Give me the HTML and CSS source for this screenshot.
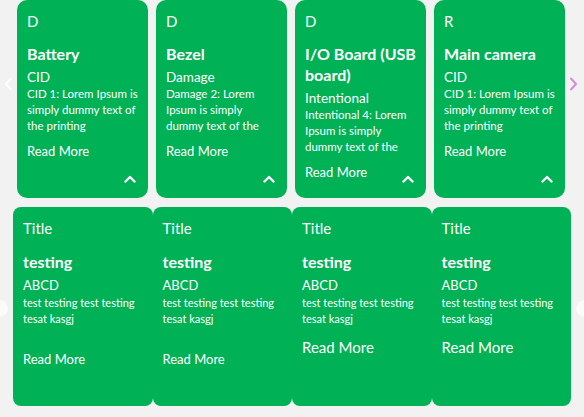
FILE: index.html
```html
<!DOCTYPE html>
<html>
<head>
<meta charset="utf-8">
<link rel="stylesheet" href="styles.css">
</head>
<body>
<div class="page">
  <section class="slider top-slider">
    <span class="nav nav-prev">
      <svg width="9" height="14" viewBox="0 0 9 14"><path d="M7 1.5 L2 7 L7 12.5" fill="none" stroke="currentColor" stroke-width="2.2" stroke-linecap="round" stroke-linejoin="round"/></svg>
    </span>
    <div class="row top-row">
      <article class="card top-card">
        <div class="letter">D</div>
        <h3 class="name">Battery</h3>
        <div class="kind">CID</div>
        <p class="desc">CID 1: Lorem Ipsum is<br>simply dummy text of<br>the printing</p>
        <a class="more">Read More</a>
        <span class="toggle"><svg width="12" height="8" viewBox="0 0 12 8"><path d="M1.5 6.5 L6 2 L10.5 6.5" fill="none" stroke="#fff" stroke-width="2.4" stroke-linecap="round" stroke-linejoin="round"/></svg></span>
      </article>
      <article class="card top-card">
        <div class="letter">D</div>
        <h3 class="name">Bezel</h3>
        <div class="kind">Damage</div>
        <p class="desc">Damage 2: Lorem<br>Ipsum is simply<br>dummy text of the</p>
        <a class="more">Read More</a>
        <span class="toggle"><svg width="12" height="8" viewBox="0 0 12 8"><path d="M1.5 6.5 L6 2 L10.5 6.5" fill="none" stroke="#fff" stroke-width="2.4" stroke-linecap="round" stroke-linejoin="round"/></svg></span>
      </article>
      <article class="card top-card">
        <div class="letter">D</div>
        <h3 class="name">I/O Board (USB board)</h3>
        <div class="kind">Intentional</div>
        <p class="desc">Intentional 4: Lorem<br>Ipsum is simply<br>dummy text of the</p>
        <a class="more">Read More</a>
        <span class="toggle"><svg width="12" height="8" viewBox="0 0 12 8"><path d="M1.5 6.5 L6 2 L10.5 6.5" fill="none" stroke="#fff" stroke-width="2.4" stroke-linecap="round" stroke-linejoin="round"/></svg></span>
      </article>
      <article class="card top-card">
        <div class="letter">R</div>
        <h3 class="name">Main camera</h3>
        <div class="kind">CID</div>
        <p class="desc">CID 1: Lorem Ipsum is<br>simply dummy text of<br>the printing</p>
        <a class="more">Read More</a>
        <span class="toggle"><svg width="12" height="8" viewBox="0 0 12 8"><path d="M1.5 6.5 L6 2 L10.5 6.5" fill="none" stroke="#fff" stroke-width="2.4" stroke-linecap="round" stroke-linejoin="round"/></svg></span>
      </article>
    </div>
    <span class="nav nav-next">
      <svg width="9" height="14" viewBox="0 0 9 14"><path d="M2 1.5 L7 7 L2 12.5" fill="none" stroke="currentColor" stroke-width="2" stroke-linecap="round" stroke-linejoin="round"/></svg>
    </span>
  </section>

  <section class="slider bottom-slider">
    <span class="dot dot-prev"></span>
    <div class="row bottom-row">
      <article class="card bottom-card">
        <div class="title">Title</div>
        <h3 class="name">testing</h3>
        <div class="kind">ABCD</div>
        <p class="desc">test testing test testing<br>tesat kasgj</p>
        <a class="more more-low">Read More</a>
      </article>
      <article class="card bottom-card">
        <div class="title">Title</div>
        <h3 class="name">testing</h3>
        <div class="kind">ABCD</div>
        <p class="desc">test testing test testing<br>tesat kasgj</p>
        <a class="more more-low">Read More</a>
      </article>
      <article class="card bottom-card">
        <div class="title">Title</div>
        <h3 class="name">testing</h3>
        <div class="kind">ABCD</div>
        <p class="desc">test testing test testing<br>tesat kasgj</p>
        <a class="more more-big">Read More</a>
      </article>
      <article class="card bottom-card">
        <div class="title">Title</div>
        <h3 class="name">testing</h3>
        <div class="kind">ABCD</div>
        <p class="desc">test testing test testing<br>tesat kasgj</p>
        <a class="more more-big">Read More</a>
      </article>
    </div>
    <span class="dot dot-next"></span>
  </section>
</div>
</body>
</html>
```

FILE: styles.css
```css
* { box-sizing: border-box; }

html, body {
  margin: 0;
  padding: 0;
  background: #f2f2f2;
  font-family: Lato, "Open Sans", sans-serif;
  color: #fff;
  overflow: hidden;
}

.page {
  width: 584px;
  height: 417px;
  display: flex;
  flex-direction: column;
}

.slider {
  position: relative;
}

.row {
  display: flex;
}

.top-row {
  padding-left: 17px;
  gap: 8.5px;
}

.card {
  background: #00b156;
  position: relative;
  display: flex;
  flex-direction: column;
  align-items: flex-start;
}

.top-card {
  width: 130.5px;
  height: 198px;
  border-radius: 10px;
  padding: 11px 9px 0 10px;
}

.letter {
  font-size: 15px;
  line-height: 20px;
}

.name {
  margin: 0;
  font-weight: 700;
  font-size: 16px;
  line-height: 21px;
}

.top-card .name {
  margin-top: 12px;
}

.kind {
  font-size: 13.5px;
  line-height: 18px;
  margin-top: 4px;
}

.desc {
  margin: 0;
  font-size: 11px;
  line-height: 16px;
  white-space: nowrap;
}

.top-card .desc {
  font-size: 11.5px;
}

.more {
  font-size: 13px;
  line-height: 20px;
}

.top-card .more {
  margin-top: 7px;
}

.toggle {
  position: absolute;
  right: 12px;
  bottom: 15px;
  display: flex;
}

.nav {
  position: absolute;
  top: 77px;
  display: flex;
}

.nav-prev {
  left: 4px;
  color: rgba(255, 255, 255, 0.85);
}

.nav-next {
  right: 6px;
  color: #d98ad9;
}

.bottom-slider {
  margin-top: 9px;
}

.bottom-row {
  padding-left: 13px;
}

.bottom-card {
  width: 139.5px;
  height: 199px;
  border-radius: 8px;
  padding: 11px 10px 0 10px;
}

.title {
  font-size: 15px;
  line-height: 20px;
}

.bottom-card .name {
  margin-top: 13px;
  line-height: 21px;
}

.bottom-card .kind {
  font-size: 13px;
  line-height: 17px;
  margin-top: 5px;
}

.bottom-card .desc {
  margin-top: 1px;
}

.more-low {
  margin-top: 22px;
}

.more-big {
  margin-top: 9px;
  font-size: 15px;
  line-height: 22px;
}

.dot {
  position: absolute;
  top: 93px;
  width: 17px;
  height: 17px;
  border-radius: 50%;
  background: #fbfbfb;
}

.dot-prev {
  left: -9px;
}

.dot-next {
  right: -9px;
}
```
